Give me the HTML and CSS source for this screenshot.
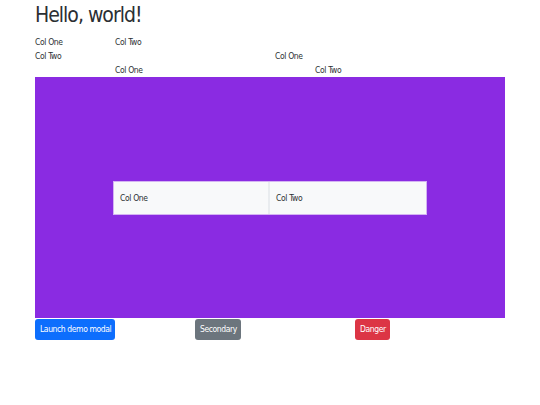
FILE: index.html
```html
<!DOCTYPE html>
<html>
<head>
<meta charset="utf-8">
<link rel="stylesheet" href="styles.css">
</head>
<body>
<div class="container">
  <h1 class="title">Hello, world!</h1>
  <div class="row row-a">
    <div>Col One</div>
    <div>Col Two</div>
  </div>
  <div class="row row-b">
    <div>Col Two</div>
    <div>Col One</div>
  </div>
  <div class="row row-c">
    <div></div>
    <div>Col One</div>
    <div>Col Two</div>
  </div>
  <div class="stage">
    <div class="panel">
      <div class="cell">Col One</div>
      <div class="cell cell-last">Col Two</div>
    </div>
  </div>
  <div class="buttons">
    <div><button class="btn btn-primary">Launch demo modal</button></div>
    <div><button class="btn btn-secondary">Secondary</button></div>
    <div><button class="btn btn-danger">Danger</button></div>
  </div>
</div>
</body>
</html>
```

FILE: styles.css
```css
html, body {
  margin: 0;
  padding: 0;
  background: #ffffff;
}
body {
  font-family: "DejaVu Sans Condensed", "DejaVu Sans", sans-serif;
  color: #2b2f33;
  font-size: 8.5px;
  letter-spacing: -0.35px;
}
.container {
  width: 470px;
  padding-left: 35px;
}
.title {
  margin: 0;
  height: 35px;
  padding-top: 3px;
  box-sizing: border-box;
  font-size: 21px;
  line-height: 25px;
  font-weight: 400;
  letter-spacing: -1px;
  color: #2b2f33;
}
.row {
  display: grid;
  height: 14px;
  line-height: 14px;
}
.row-a { grid-template-columns: 80px 1fr; }
.row-b { grid-template-columns: 240px 1fr; }
.row-c { grid-template-columns: 80px 200px 1fr; }
.stage {
  height: 241px;
  background: #8a2be2;
  display: flex;
  align-items: center;
  padding-left: 78px;
  box-sizing: border-box;
}
.panel {
  width: 314px;
  height: 34px;
  box-sizing: border-box;
  display: grid;
  grid-template-columns: 156px 1fr;
  background: #f8f9fa;
  border: 1px solid #d4b3f3;
}
.cell {
  padding-left: 6px;
  line-height: 32px;
  border-right: 2px solid #e9ecef;
}
.cell-last {
  border-right: 0;
}
.buttons {
  display: grid;
  grid-template-columns: 160px 160px 1fr;
  padding-top: 1px;
}
.btn {
  font-family: "DejaVu Sans Condensed", "DejaVu Sans", sans-serif;
  font-size: 8.5px;
  letter-spacing: -0.4px;
  color: #ffffff;
  border: 0;
  border-radius: 3px;
  height: 21px;
  padding: 0 4px 0 5px;
  margin: 0;
  line-height: 21px;
}
.btn-primary { background: #0d6efd; }
.btn-secondary { background: #6c757d; }
.btn-danger { background: #dc3545; }
```
